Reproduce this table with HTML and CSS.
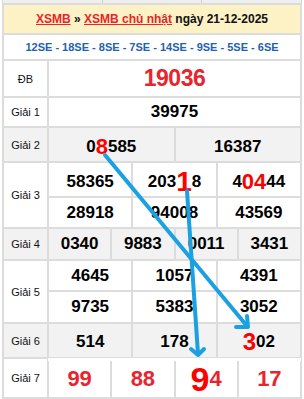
FILE: index.html
```html
<!DOCTYPE html>
<html lang="vi">
<head>
<meta charset="utf-8">
<title>XSMB chủ nhật 21-12-2025</title>
<link rel="stylesheet" href="styles.css">
</head>
<body>
<div class="page">
  <div class="topstrip"><span></span><span></span><span></span></div>
  <div class="board">
    <div class="head"><a href="#">XSMB</a>&nbsp;»&nbsp;<a href="#">XSMB chủ nhật</a>&nbsp;ngày 21-12-2025</div>
    <div class="codes">12SE - 18SE - 8SE - 7SE - 14SE - 9SE - 5SE - 6SE</div>

    <div class="row r-db">
      <div class="label">ĐB</div>
      <div class="data"><div class="sub"><div class="cell db">19036</div></div></div>
    </div>

    <div class="row r-g1">
      <div class="label">Giải 1</div>
      <div class="data"><div class="sub"><div class="cell">39975</div></div></div>
    </div>

    <div class="row r-g2 grey">
      <div class="label">Giải 2</div>
      <div class="data"><div class="sub">
        <div class="cell">0<span class="hl s22">8</span>585</div>
        <div class="cell">16387</div>
      </div></div>
    </div>

    <div class="row r-g3">
      <div class="label">Giải 3</div>
      <div class="data">
        <div class="sub">
          <div class="cell">58365</div>
          <div class="cell">203<span class="hl s28">1</span>8</div>
          <div class="cell">4<span class="hl s22">04</span>44</div>
        </div>
        <div class="sub">
          <div class="cell">28918</div>
          <div class="cell">94008</div>
          <div class="cell">43569</div>
        </div>
      </div>
    </div>

    <div class="row r-g4 grey">
      <div class="label">Giải 4</div>
      <div class="data"><div class="sub">
        <div class="cell">0340</div>
        <div class="cell">9883</div>
        <div class="cell">0011</div>
        <div class="cell">3431</div>
      </div></div>
    </div>

    <div class="row r-g5">
      <div class="label">Giải 5</div>
      <div class="data">
        <div class="sub">
          <div class="cell">4645</div>
          <div class="cell">1057</div>
          <div class="cell">4391</div>
        </div>
        <div class="sub">
          <div class="cell">9735</div>
          <div class="cell">5383</div>
          <div class="cell">3052</div>
        </div>
      </div>
    </div>

    <div class="row r-g6 grey">
      <div class="label">Giải 6</div>
      <div class="data"><div class="sub">
        <div class="cell">514</div>
        <div class="cell">178</div>
        <div class="cell"><span class="hl s24">3</span>02</div>
      </div></div>
    </div>

    <div class="row r-g7">
      <div class="label">Giải 7</div>
      <div class="data"><div class="sub">
        <div class="cell red">99</div>
        <div class="cell red">88</div>
        <div class="cell red"><span class="hl s34">9</span>4</div>
        <div class="cell red">17</div>
      </div></div>
    </div>
  </div>

  <svg class="arrows" width="304" height="399" viewBox="0 0 304 399">
    <g class="arrow-lines">
      <line x1="105" y1="155" x2="247" y2="326"/>
      <polyline points="247,316 248,327 236,327"/>
      <line x1="187" y1="191" x2="198" y2="354"/>
      <polyline points="191,349 198,355 204,349"/>
    </g>
  </svg>
</div>
</body>
</html>
```

FILE: styles.css
```css
html, body {
  margin: 0;
  padding: 0;
  background: #ffffff;
}

body {
  font-family: "Liberation Sans", Arial, sans-serif;
  color: #000;
}

.page {
  position: relative;
  width: 304px;
  height: 399px;
  overflow: hidden;
}

.topstrip {
  display: flex;
  width: 300px;
  height: 3px;
  margin-left: 2px;
  box-sizing: border-box;
  border-left: 1px solid #d6d6d6;
}

.topstrip span {
  flex: 1 1 0;
  background: #efefef;
  border-right: 1px solid #d0d0d0;
}

.board {
  width: 300px;
  margin-left: 2px;
  border: 1px solid #dcdcdc;
  box-sizing: border-box;
}

.head {
  height: 30px;
  box-sizing: border-box;
  border: 1px solid #dcdcdc;
  background: #fdf2c6;
  display: flex;
  align-items: center;
  justify-content: center;
  font-size: 12px;
  font-weight: bold;
  color: #111;
  white-space: nowrap;
}

.head a {
  color: #e8252c;
  text-decoration: underline;
}

.codes {
  height: 26px;
  box-sizing: border-box;
  border: 1px solid #dcdcdc;
  display: flex;
  align-items: center;
  justify-content: center;
  font-size: 11px;
  font-weight: bold;
  color: #1f62b0;
  white-space: nowrap;
}

.row {
  display: flex;
}

.label {
  flex: none;
  width: 45px;
  box-sizing: border-box;
  border: 1px solid #dcdcdc;
  display: flex;
  align-items: center;
  justify-content: center;
  font-size: 11px;
  color: #111;
}

.data {
  flex: 1 1 0;
  min-width: 0;
  display: flex;
  flex-direction: column;
}

.sub {
  display: flex;
}

.cell {
  flex: 1 1 0;
  min-width: 0;
  box-sizing: border-box;
  border: 1px solid #dcdcdc;
  display: flex;
  align-items: center;
  justify-content: center;
  font-size: 17px;
  font-weight: bold;
  color: #000;
  white-space: nowrap;
}

.grey .label,
.grey .cell {
  background: #f2f2f2;
}

.hl {
  color: #ff0000;
  line-height: 0;
}

.s21 { font-size: 21px; }
.s22 { font-size: 22px; }
.s24 { font-size: 24px; }
.s28 { font-size: 28px; }
.s34 { font-size: 34px; }

.cell.db {
  font-size: 23px;
  letter-spacing: -0.5px;
  color: #e8252c;
}

.cell.red {
  font-size: 22px;
  color: #e8252c;
}

/* row heights */
.r-db .sub { height: 37px; }
.r-g1 .sub { height: 30px; }
.r-g2 .sub { height: 35px; }
.r-g2 .cell { padding-top: 4px; }
.r-g3 .sub:first-child { height: 35px; }
.r-g3 .sub:first-child .cell { padding-top: 5px; }
.r-g3 .sub:last-child { height: 31px; }
.r-g4 .sub { height: 32px; }
.r-g5 .sub:first-child { height: 31px; }
.r-g5 .sub:last-child { height: 32px; }
.r-g6 .sub { height: 35px; }
.r-g6 .cell { padding-top: 3px; }
.r-g7 .sub { height: 40px; }
.r-g7 .cell {
  border-top: 0;
  margin-top: 3px;
}

.arrows {
  position: absolute;
  left: 0;
  top: 0;
  pointer-events: none;
}

.arrow-lines {
  stroke: #1ba1e2;
  stroke-width: 4;
  stroke-linecap: round;
  stroke-linejoin: round;
  fill: none;
}
```
